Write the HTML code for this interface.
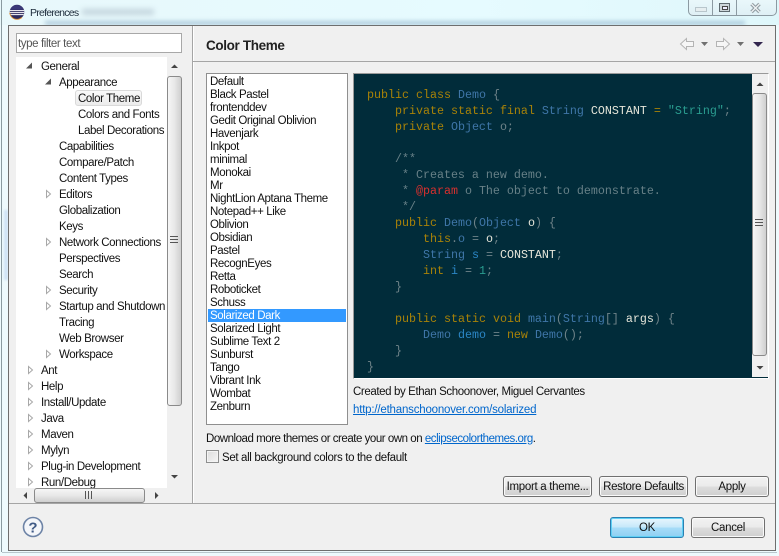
<!DOCTYPE html>
<html><head><meta charset="utf-8"><title>Preferences</title>
<style>
html,body{margin:0;padding:0}
body{position:relative;width:779px;height:556px;overflow:hidden;background:#eefafd;font-family:"Liberation Sans",sans-serif;font-size:12px;color:#000}
div,span.a,a.a{position:absolute}
.t{position:absolute;white-space:nowrap;line-height:16px;height:16px;margin-top:1px;font-size:11.5px;letter-spacing:-.39px;color:#111}
.l{position:absolute;left:210px;white-space:nowrap;line-height:13px;height:13px;margin-top:1px;font-size:11.5px;letter-spacing:-.39px;color:#111}
.c{position:absolute;left:367px;white-space:pre;line-height:16px;height:16px;font-family:"Liberation Mono",monospace;font-size:11.67px;color:#6f8389}
.k{color:#a88208}.y{color:#3f76a8}.m{color:#678087}.w{color:#e6e6da}.s{color:#2a9d90}.v{color:#2b86c5}.r{color:#d8302e}.g{color:#6f8389}.p{color:#a88208}
.b{position:absolute;box-sizing:border-box;border:1px solid #707070;border-radius:3px;background:linear-gradient(#f2f2f2 0,#ebebeb 48%,#dddddd 52%,#cfcfcf 100%);box-shadow:inset 0 0 0 1px #fafafa;text-align:center;font-size:11.5px;letter-spacing:-.3px;color:#111;line-height:21px;white-space:nowrap}
a{color:#0066cc;text-decoration:underline}
svg{position:absolute;overflow:visible}
</style></head><body>
<!-- aero frame -->
<div style="left:0;top:0;width:779px;height:25px;background:linear-gradient(90deg,#e8f8fb,#e6fbff 60%,#dff7fb)"></div>
<div style="left:82px;top:9px;width:72px;height:6px;background:#8d9fb0;filter:blur(3px);opacity:.4"></div>
<div style="left:45px;top:21px;width:700px;height:4px;background:#7ea2c0;filter:blur(2px);opacity:.55"></div>
<div style="left:1px;top:0;width:1px;height:552px;background:#8a9aa0"></div>
<div style="left:2px;top:552px;width:775px;height:1px;background:#b8c6cc"></div>
<div style="left:4px;top:210px;width:4px;height:70px;background:#cfe2f5;filter:blur(1px)"></div>
<!-- title -->
<svg style="left:9px;top:4px" width="16" height="16" viewBox="0 0 16 16"><circle cx="8" cy="8" r="7.3" fill="#2c2a5c"/><path d="M1.2 5.6a7.3 7.3 0 0 1 13.6 0z" fill="#3a3878"/><path d="M.9 6.6h14.2M.7 8.6h14.6M1.3 10.6h13.4" stroke="#fff" stroke-width="1"/><circle cx="8" cy="8" r="7.3" fill="none" stroke="#d9892a" stroke-width=".9" stroke-dasharray="16 30" stroke-dashoffset="-6"/></svg>
<div class="t" style="left:30px;top:5px;margin-top:0;font-size:10.5px;letter-spacing:-.75px;color:#1c2a3a">Preferences</div>
<!-- caption buttons -->
<div style="left:688px;top:-2px;width:87px;height:16px;border:1px solid #8c9aa2;border-radius:0 0 5px 5px;background:linear-gradient(#eaf8fb,#dff0f5)"></div>
<div style="left:712px;top:0;width:1px;height:15px;background:#8c9aa2"></div>
<div style="left:736px;top:0;width:1px;height:15px;background:#8c9aa2"></div>
<div style="left:695px;top:7px;width:10px;height:3px;border:1px solid #b8c6cc;background:#e6eef0"></div>
<div style="left:719px;top:3px;width:9px;height:7px;border:1px solid #5f6a70;background:#cdd6da"></div>
<div style="left:722px;top:6px;width:4px;height:2px;border:1px solid #444;background:#eef"></div>
<svg style="left:750px;top:3px" width="11" height="10"><path d="M1.5 1l8 8M9.5 1l-8 8" stroke="#8e9aa0" stroke-width="3.4"/><path d="M1.5 1l8 8M9.5 1l-8 8" stroke="#eef2f3" stroke-width="1.4"/></svg>
<!-- dialog -->
<div style="left:8px;top:25px;width:766px;height:524px;border:1px solid #6e6e6e;background:#f0f0f0"></div>
<div style="left:192px;top:26px;width:1px;height:477px;background:#a5a5a5"></div>
<div style="left:193px;top:26px;width:1px;height:477px;background:#fff"></div>
<div style="left:193px;top:61px;width:582px;height:1px;background:#a5a5a5"></div>
<div style="left:9px;top:503px;width:766px;height:1px;background:#a5a5a5"></div>
<!-- filter -->
<div style="left:16px;top:33px;width:164px;height:18px;border:1px solid #a8a8a8;background:#fff"></div>
<div class="t" style="left:18px;top:35px;color:#555">type filter text</div>
<!-- tree -->
<div style="left:16px;top:57px;width:151px;height:431px;background:#fff;overflow:hidden"></div>
<div style="left:75px;top:90px;width:65px;height:14px;border:1px solid #d9d9d9;border-radius:3px;background:linear-gradient(#fafafa,#ececec)"></div>
<div style="left:16px;top:57px;width:151px;height:431px;overflow:hidden">
<div class="t" style="left:25px;top:1px">General</div>
<div class="t" style="left:43px;top:17px">Appearance</div>
<div class="t" style="left:62px;top:33px">Color Theme</div>
<div class="t" style="left:62px;top:49px">Colors and Fonts</div>
<div class="t" style="left:62px;top:65px">Label Decorations</div>
<div class="t" style="left:43px;top:81px">Capabilities</div>
<div class="t" style="left:43px;top:97px">Compare/Patch</div>
<div class="t" style="left:43px;top:113px">Content Types</div>
<div class="t" style="left:43px;top:129px">Editors</div>
<div class="t" style="left:43px;top:145px">Globalization</div>
<div class="t" style="left:43px;top:161px">Keys</div>
<div class="t" style="left:43px;top:177px">Network Connections</div>
<div class="t" style="left:43px;top:193px">Perspectives</div>
<div class="t" style="left:43px;top:209px">Search</div>
<div class="t" style="left:43px;top:225px">Security</div>
<div class="t" style="left:43px;top:241px">Startup and Shutdown</div>
<div class="t" style="left:43px;top:257px">Tracing</div>
<div class="t" style="left:43px;top:273px">Web Browser</div>
<div class="t" style="left:43px;top:289px">Workspace</div>
<div class="t" style="left:25px;top:305px">Ant</div>
<div class="t" style="left:25px;top:321px">Help</div>
<div class="t" style="left:25px;top:337px">Install/Update</div>
<div class="t" style="left:25px;top:353px">Java</div>
<div class="t" style="left:25px;top:369px">Maven</div>
<div class="t" style="left:25px;top:385px">Mylyn</div>
<div class="t" style="left:25px;top:401px">Plug-in Development</div>
<div class="t" style="left:25px;top:417px">Run/Debug</div>
</div>
<svg style="left:0;top:0" width="190" height="490">
<g fill="#555"><path d="M26 68.5h6v-6z"/><path d="M45 84.5h6v-6z"/></g>
<g fill="#fff" stroke="#a8a8a8"><path d="M46.5 190.5v7l4-3.5z"/><path d="M46.5 238.500v7l4-3.500z"/><path d="M46.500 286.500v7l4-3.500z"/><path d="M46.500 302.500v7l4-3.500z"/><path d="M46.500 350.500v7l4-3.500z"/><path d="M28.500 366.500v7l4-3.500z"/><path d="M28.500 382.500v7l4-3.500z"/><path d="M28.500 398.500v7l4-3.500z"/><path d="M28.500 414.500v7l4-3.500z"/><path d="M28.500 430.500v7l4-3.500z"/><path d="M28.500 446.500v7l4-3.500z"/><path d="M28.500 462.500v7l4-3.500z"/><path d="M28.500 478.500v7l4-3.500z"/></g>
</svg>
<!-- tree scrollbars -->
<div style="left:167px;top:57px;width:15px;height:431px;background:#f0f0f0"></div>
<svg style="left:167px;top:57px" width="15" height="431"><path d="M4 11h7L7.500 7.500z" fill="#444"/><path d="M4 418h7l-3.500 3.500z" fill="#444"/></svg>
<div style="left:167px;top:76px;width:13px;height:328px;border:1px solid #8a8a8a;border-radius:3px;background:linear-gradient(90deg,#f6f6f6,#e8e8e8 50%,#cfcfcf)"></div>
<svg style="left:170px;top:236px" width="9" height="8"><path d="M0 .500h8M0 3.500h8M0 6.500h8" stroke="#555"/></svg>
<div style="left:16px;top:488px;width:166px;height:15px;background:#f0f0f0"></div>
<svg style="left:16px;top:488px" width="166" height="15"><path d="M11 4v7L7.500 7.500z" fill="#444"/><path d="M139 4v7l3.500-3.500z" fill="#444"/></svg>
<div style="left:34px;top:488px;width:109px;height:13px;border:1px solid #8a8a8a;border-radius:3px;background:linear-gradient(#f6f6f6,#e8e8e8 50%,#cfcfcf)"></div>
<svg style="left:85px;top:491px" width="8" height="9"><path d="M.500 0v8M3.500 0v8M6.500 0v8" stroke="#555"/></svg>
<!-- heading -->
<div class="t" style="left:206px;top:37px;font-weight:bold;font-size:13.5px;letter-spacing:-.36px;color:#222">Color Theme</div>
<svg style="left:678px;top:36px" width="90" height="16">
<path d="M2.500 8L8.500 2.500v3h7v5h-7v3z" fill="#f6f6f6" stroke="#b4b4b4"/>
<path d="M38.500 5.500h7v-3l6 5.500-6 5.500v-3h-7z" fill="#f6f6f6" stroke="#b4b4b4"/>
<path d="M23 6h7l-3.500 4z" fill="#707070"/><path d="M59 6h7l-3.500 4z" fill="#707070"/>
<path d="M75 6h10l-5 5z" fill="#33264e"/></svg>
<!-- list -->
<div style="left:206px;top:73px;width:140px;height:350px;border:1px solid #8f8f8f;background:#fff"></div>
<div style="left:208px;top:309px;width:138px;height:13px;background:#3399ff"></div>
<div class="l" style="top:75px">Default</div>
<div class="l" style="top:88px">Black Pastel</div>
<div class="l" style="top:101px">frontenddev</div>
<div class="l" style="top:114px">Gedit Original Oblivion</div>
<div class="l" style="top:127px">Havenjark</div>
<div class="l" style="top:140px">Inkpot</div>
<div class="l" style="top:153px">minimal</div>
<div class="l" style="top:166px">Monokai</div>
<div class="l" style="top:179px">Mr</div>
<div class="l" style="top:192px">NightLion Aptana Theme</div>
<div class="l" style="top:205px">Notepad++ Like</div>
<div class="l" style="top:218px">Oblivion</div>
<div class="l" style="top:231px">Obsidian</div>
<div class="l" style="top:244px">Pastel</div>
<div class="l" style="top:257px">RecognEyes</div>
<div class="l" style="top:270px">Retta</div>
<div class="l" style="top:283px">Roboticket</div>
<div class="l" style="top:296px">Schuss</div>
<div class="l" style="top:309px;color:#fff">Solarized Dark</div>
<div class="l" style="top:322px">Solarized Light</div>
<div class="l" style="top:335px">Sublime Text 2</div>
<div class="l" style="top:348px">Sunburst</div>
<div class="l" style="top:361px">Tango</div>
<div class="l" style="top:374px">Vibrant Ink</div>
<div class="l" style="top:387px">Wombat</div>
<div class="l" style="top:400px">Zenburn</div>
<!-- code -->
<div style="left:353px;top:73px;width:414px;height:304px;border:1px solid #9a9a9a;border-bottom-color:#fff;border-right-color:#fff;background:#012c3a"></div>
<div style="left:0;top:1px;width:779px;height:400px">
<div class="c" style="top:86px"><span class="k">public</span> <span class="k">class</span> <span class="y">Demo</span> <span class="g">{</span></div>
<div class="c" style="top:102px">    <span class="k">private</span> <span class="k">static</span> <span class="k">final</span> <span class="y">String</span> <span class="w">CONSTANT</span> <span class="p">=</span> <span class="s">"String"</span><span class="g">;</span></div>
<div class="c" style="top:118px">    <span class="k">private</span> <span class="y">Object</span> <span class="g">o;</span></div>
<div class="c m" style="top:150px">    /**</div>
<div class="c m" style="top:166px">     * Creates a new demo.</div>
<div class="c m" style="top:182px">     * <span class="r">@param</span> o The object to demonstrate.</div>
<div class="c m" style="top:198px">     */</div>
<div class="c" style="top:214px">    <span class="k">public</span> <span class="y">Demo</span><span class="g">(</span><span class="y">Object</span> <span class="w">o</span><span class="g">) {</span></div>
<div class="c" style="top:230px">        <span class="k">this</span><span class="g">.</span><span class="y">o</span> <span class="g">=</span> <span class="w">o</span><span class="g">;</span></div>
<div class="c" style="top:246px">        <span class="y">String</span> <span class="v">s</span> <span class="g">=</span> <span class="w">CONSTANT</span><span class="g">;</span></div>
<div class="c" style="top:262px">        <span class="k">int</span> <span class="v">i</span> <span class="g">=</span> <span class="s">1</span><span class="g">;</span></div>
<div class="c" style="top:278px">    <span class="g">}</span></div>
<div class="c" style="top:310px">    <span class="k">public</span> <span class="k">static</span> <span class="k">void</span> <span class="y">main</span><span class="g">(</span><span class="y">String</span><span class="g">[]</span> <span class="w">args</span><span class="g">) {</span></div>
<div class="c" style="top:326px">        <span class="y">Demo</span> <span class="v">demo</span> <span class="g">=</span> <span class="k">new</span> <span class="y">Demo</span><span class="g">();</span></div>
<div class="c" style="top:342px">    <span class="g">}</span></div>
<div class="c" style="top:358px"><span class="g">}</span></div>
</div>
<!-- code scrollbar -->
<div style="left:752px;top:74px;width:16px;height:303px;background:#f0f0f0"></div>
<svg style="left:752px;top:74px" width="16" height="303"><path d="M4.500 12h7L8 8.500z" fill="#444"/><path d="M4.500 292h7L8 295.500z" fill="#444"/></svg>
<div style="left:752px;top:93px;width:13px;height:261px;border:1px solid #8a8a8a;border-radius:3px;background:linear-gradient(90deg,#f6f6f6,#e8e8e8 50%,#cfcfcf)"></div>
<svg style="left:755px;top:219px" width="9" height="8"><path d="M0 .500h8M0 3.500h8M0 6.500h8" stroke="#555"/></svg>
<!-- text below -->
<div class="t" style="left:353px;top:383px">Created by Ethan Schoonover, Miguel Cervantes</div>
<div class="t" style="left:353px;top:401px;letter-spacing:-.2px"><a>http://ethanschoonover.com/solarized</a></div>
<div class="t" style="left:206px;top:430px;letter-spacing:-.47px">Download more themes or create your own on <a>eclipsecolorthemes.org</a>.</div>
<div style="left:206px;top:450px;width:11px;height:11px;border:1px solid #8e8f8f;background:linear-gradient(135deg,#dcdcdc,#f6f6f6);box-shadow:inset 0 0 0 1px #f4f4f4"></div>
<div class="t" style="left:222px;top:449px;letter-spacing:-.35px">Set all background colors to the default</div>
<!-- buttons -->
<div class="b" style="left:503px;top:476px;width:89px;height:21px">Import a theme...</div>
<div class="b" style="left:599px;top:476px;width:89px;height:21px">Restore Defaults</div>
<div class="b" style="left:695px;top:476px;width:74px;height:21px">Apply</div>
<div class="b" style="left:610px;top:517px;width:74px;height:21px;line-height:20px;border-color:#2c7fb0;background:linear-gradient(#e8f6fd,#c6e8fa 48%,#a6dcf8 52%,#8fd0f2);box-shadow:inset 0 0 0 1px #5fd0f5">OK</div>
<div class="b" style="left:691px;top:517px;width:74px;height:21px;line-height:20px">Cancel</div>
<!-- help -->
<svg style="left:22px;top:516px" width="22" height="22"><circle cx="11" cy="11" r="9.500" fill="#f4f6fa" stroke="#6d83a6" stroke-width="1.600"/><text x="11" y="16.500" text-anchor="middle" font-family="Liberation Sans, sans-serif" font-weight="bold" font-size="15" fill="#3f5a86">?</text></svg>
</body></html>
